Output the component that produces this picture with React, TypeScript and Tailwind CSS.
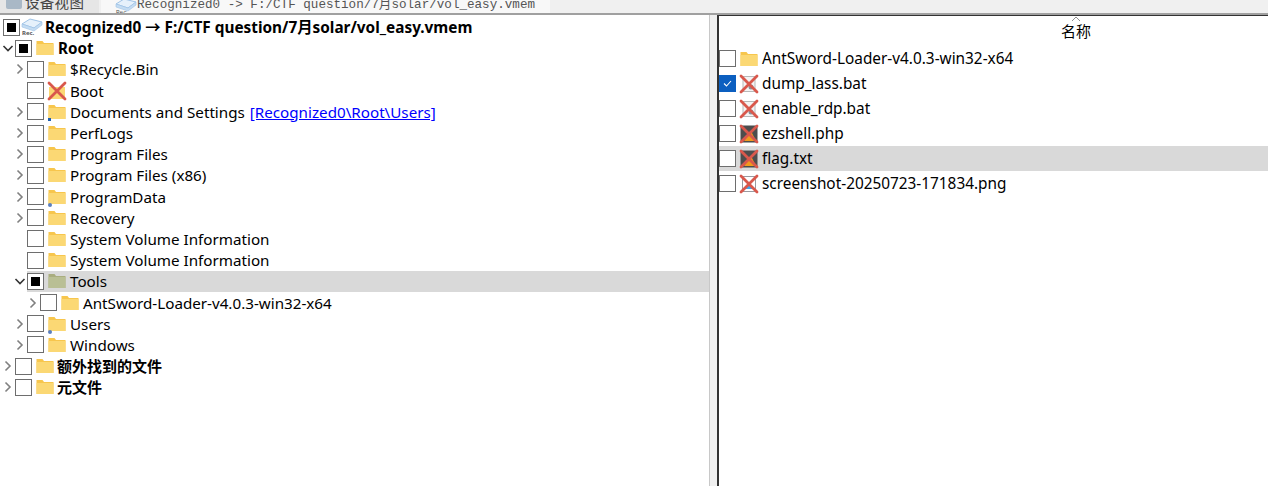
import React from "react";

const FONT = "font-['Noto_Sans','Noto_Sans_CJK_SC',sans-serif]";

function Folder({ dim, badge }: { dim?: boolean; badge?: "link" | "dot" }) {
  const back = dim ? "#a9ad7f" : "#f7c64d";
  const front = dim ? "#b9bf94" : "#fbd874";
  return (
    <span className="relative block w-[18px] h-[18px] shrink-0">
      <svg className="block" width="18" height="18" viewBox="0 0 18 18">
        <path d="M0.5 2 h6 l1.5 2 h9.5 v12 h-17 z" fill={back} />
        <path d="M0.5 5 h17 v11 h-17 z" fill={front} />
      </svg>
      {badge === "link" && <span className="absolute left-0 bottom-[0px] w-[3px] h-[3px] bg-[#1f5fb0]" />}
      {badge === "dot" && <span className="absolute left-0 -bottom-[1px] w-[4px] h-[4px] rounded-full bg-[#5a7fc0]" />}
    </span>
  );
}

function Cross() {
  return (
    <svg className="absolute -left-[1px] -top-[1px] block" width="20" height="20" viewBox="0 0 20 20">
      <path d="M2 2 L18 18 M18 2 L2 18" stroke="#d9584c" strokeWidth="2.8" strokeLinecap="round" fill="none" />
    </svg>
  );
}

function Deleted({ kind }: { kind: "folder" | "bat" | "dark" | "png" }) {
  return (
    <span className="relative block w-[18px] h-[18px] shrink-0">
      {kind === "folder" && (
        <svg className="block" width="18" height="18" viewBox="0 0 18 18">
          <path d="M1 5 h16 v12 h-16 z" fill="#fbd874" />
        </svg>
      )}
      {kind === "bat" && (
        <svg className="block" width="18" height="18" viewBox="0 0 18 18">
          <path d="M3 1.5 h12 v15 h-12 z" fill="#f4f4f4" stroke="#b8b8b8" />
          <circle cx="11" cy="12" r="2.5" fill="#8a8f98" />
        </svg>
      )}
      {kind === "dark" && (
        <svg className="block" width="18" height="18" viewBox="0 0 18 18">
          <rect x="0.5" y="0.5" width="17" height="17" fill="#4d4d4d" />
          <path d="M4 16 L11 6 L16 16 z" fill="#f09a1e" />
        </svg>
      )}
      {kind === "png" && (
        <svg className="block" width="18" height="18" viewBox="0 0 18 18">
          <path d="M2.5 1.5 h13 v15 h-13 z" fill="#ffffff" stroke="#9a9aa0" />
          <path d="M4 14 L9 8 L14 14 z" fill="#41a5ee" />
        </svg>
      )}
      <Cross />
    </span>
  );
}

function Chevron({ open, dark }: { open?: boolean; dark?: boolean }) {
  return (
    <svg width="12" height="12" viewBox="0 0 12 12" className="shrink-0 block">
      <path
        d={open ? "M1.5 4 L6 8.5 L10.5 4" : "M3.5 1.5 L8 6 L3.5 10.5"}
        fill="none"
        stroke={dark ? "#333333" : "#808080"}
        strokeWidth="1.6"
      />
    </svg>
  );
}

function Check({ state }: { state?: "mixed" | "checked" }) {
  if (state === "checked") {
    return (
      <span className="w-[17px] h-[17px] shrink-0 bg-[#0c5fc0] flex items-center justify-center">
        <svg width="11" height="11" viewBox="0 0 11 11">
          <path d="M2 5.5 L4.5 8 L9 3" fill="none" stroke="#ffffff" strokeWidth="1.1" />
        </svg>
      </span>
    );
  }
  return (
    <span className="w-[17px] h-[17px] shrink-0 border border-[#6e6e6e] bg-white flex items-center justify-center">
      {state === "mixed" && <span className="w-[9px] h-[9px] bg-black" />}
    </span>
  );
}

type Row = {
  indent: string;
  chev?: "open" | "closed";
  check?: "mixed";
  icon: React.ReactNode;
  label: string;
  bold?: boolean;
  cjk?: boolean;
  link?: string;
  selected?: boolean;
};

const rows: Row[] = [
  { indent: "pl-[2px]", chev: "open", check: "mixed", icon: <Folder />, label: "Root", bold: true },
  { indent: "pl-[14px]", chev: "closed", icon: <Folder />, label: "$Recycle.Bin" },
  { indent: "pl-[14px]", icon: <Deleted kind="folder" />, label: "Boot" },
  { indent: "pl-[14px]", chev: "closed", icon: <Folder badge="link" />, label: "Documents and Settings", link: "[Recognized0\\Root\\Users]" },
  { indent: "pl-[14px]", chev: "closed", icon: <Folder />, label: "PerfLogs" },
  { indent: "pl-[14px]", chev: "closed", icon: <Folder />, label: "Program Files" },
  { indent: "pl-[14px]", chev: "closed", icon: <Folder />, label: "Program Files (x86)" },
  { indent: "pl-[14px]", chev: "closed", icon: <Folder badge="dot" />, label: "ProgramData" },
  { indent: "pl-[14px]", chev: "closed", icon: <Folder />, label: "Recovery" },
  { indent: "pl-[14px]", icon: <Folder />, label: "System Volume Information" },
  { indent: "pl-[14px]", icon: <Folder />, label: "System Volume Information" },
  { indent: "pl-[14px]", chev: "open", check: "mixed", icon: <Folder dim />, label: "Tools", selected: true },
  { indent: "pl-[27px]", chev: "closed", icon: <Folder />, label: "AntSword-Loader-v4.0.3-win32-x64" },
  { indent: "pl-[14px]", chev: "closed", icon: <Folder badge="dot" />, label: "Users" },
  { indent: "pl-[14px]", chev: "closed", icon: <Folder />, label: "Windows" },
  { indent: "pl-[2px]", chev: "closed", icon: <Folder />, label: "额外找到的文件", bold: true, cjk: true },
  { indent: "pl-[2px]", chev: "closed", icon: <Folder />, label: "元文件", bold: true, cjk: true },
];

const files: { icon: React.ReactNode; label: string; checked?: boolean; selected?: boolean }[] = [
  { icon: <Folder />, label: "AntSword-Loader-v4.0.3-win32-x64" },
  { icon: <Deleted kind="bat" />, label: "dump_lass.bat", checked: true },
  { icon: <Deleted kind="bat" />, label: "enable_rdp.bat" },
  { icon: <Deleted kind="dark" />, label: "ezshell.php" },
  { icon: <Deleted kind="dark" />, label: "flag.txt", selected: true },
  { icon: <Deleted kind="png" />, label: "screenshot-20250723-171834.png" },
];

function DriveIcon() {
  return (
    <span className="relative block w-[22px] h-[18px] shrink-0">
      <svg className="block" width="22" height="18" viewBox="0 0 22 18">
        <path d="M1 6 L9 1 L21 4 L13 10 z" fill="#e6f1fb" stroke="#9fc3e6" />
        <path d="M1 6 L13 10 L21 4 V7 L13 13 L1 9 z" fill="#c4dcf2" stroke="#9fc3e6" strokeWidth="0.6" />
      </svg>
      <span className="absolute left-[1px] top-[12px] text-[6px] leading-[6px] text-[#555555]">Rec.</span>
    </span>
  );
}

export default function App() {
  return (
    <div className={`w-[1268px] h-[486px] overflow-hidden bg-white flex flex-col text-black ${FONT}`}>
      <div className="h-[15px] shrink-0 bg-[#f0f0f0] border-b-[2px] border-[#a0a0a0] flex overflow-hidden">
        <div className="w-[99px] bg-[#e6e6e6] flex items-end pl-[6px] gap-[3px] text-[#444444] text-[14.5px] leading-[20px] font-['Noto_Sans_CJK_SC',serif]">
          <span className="w-[16px] h-[10px] bg-[#a9b8c6] rounded-b-[2px] mb-[4px]" />
          <span className="mb-[1px] tracking-[0.3px]">设备视图</span>
        </div>
        <div className="ml-[2px] w-[449px] bg-[#f8f8f8] flex items-end pl-[14px] text-[#555555] text-[12.6px] leading-[18px] font-['Liberation_Mono','Noto_Sans_CJK_SC',monospace]">
          <span className="-mb-[3px]"><DriveIcon /></span>
          <span className="-mb-[1px] whitespace-pre">Recognized0 -&gt; F:/CTF question/7月solar/vol_easy.vmem</span>
        </div>
      </div>

      <div className="flex-1 flex min-h-0">
        <div className="w-[709px] shrink-0 overflow-hidden text-[15.2px] leading-[20px]">
          <div className="h-[21.2px] mt-[1.5px] flex items-center gap-[1px] pl-[3px] font-bold text-[15.35px]">
            <Check state="mixed" />
            <DriveIcon />
            <span className="ml-[1px] whitespace-nowrap">Recognized0 → F:/CTF question/7月solar/vol_easy.vmem</span>
          </div>
          {rows.map((r, i) => (
            <div key={i} className={`h-[21.2px] flex items-center ${r.indent}`}>
              <span className="w-[12px] shrink-0 flex justify-center mr-[1px]">
                {r.chev && <Chevron open={r.chev === "open"} dark={r.chev === "open"} />}
              </span>
              <div className={`flex-1 h-full flex items-center gap-[4px] ${r.selected ? "bg-[#d9d9d9]" : ""}`}>
                <Check state={r.check} />
                {r.icon}
                <span className={`whitespace-nowrap ${r.bold ? "font-bold" : ""} ${r.cjk ? "text-[15px] -ml-[1px]" : ""}`}>{r.label}</span>
                {r.link && <span className="ml-[1px] whitespace-nowrap text-[#0000ff] underline">{r.link}</span>}
              </div>
            </div>
          ))}
        </div>

        <div className="w-[8px] shrink-0 bg-[#f0f0f0] border-l border-[#c8c8c8]" />

        <div className="flex-1 min-w-0 border-l-[2px] border-t-[1px] border-[#333333] bg-white text-[15.35px]">
          <div className="relative h-[30px] flex justify-center text-[15px] pl-[165px] pt-[3px] leading-[24px]">
            <svg className="absolute left-[352px] top-0" width="10" height="6" viewBox="0 0 10 6">
              <path d="M1 5 L5 1 L9 5" fill="none" stroke="#909090" />
            </svg>
            <span>名称</span>
          </div>
          {files.map((f) => (
            <div key={f.label} className={`h-[25px] flex items-center gap-[4px] ${f.selected ? "bg-[#d9d9d9]" : ""}`}>
              <Check state={f.checked ? "checked" : undefined} />
              {f.icon}
              <span className="whitespace-nowrap">{f.label}</span>
            </div>
          ))}
        </div>
      </div>
    </div>
  );
}
